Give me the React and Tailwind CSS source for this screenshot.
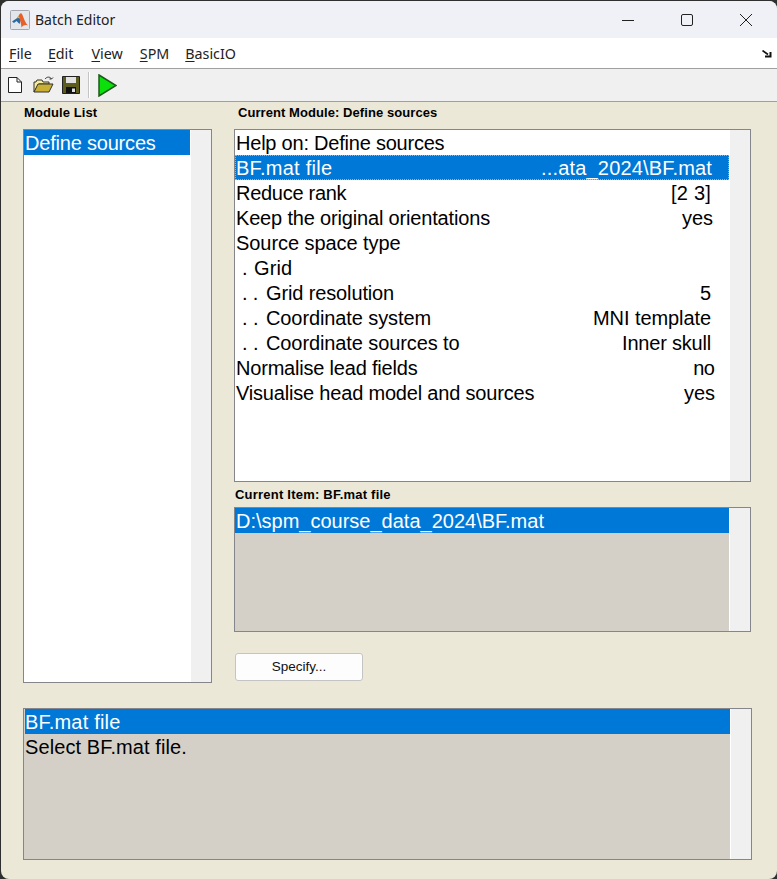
import React from "react";

const rows = [
  { label: "Reduce rank", track: "tracking-[-0.28px]", value: "[2 3]", valueTrack: "tracking-[0.2px]", pr: "pr-[18px]" },
  { label: "Keep the original orientations", track: "tracking-[-0.17px]", value: "yes", pr: "pr-[16px]" },
  { label: "Source space type", track: "tracking-[-0.06px]", value: "" },
  { dots: ".", label: "Grid", track: "tracking-[0.1px]", value: "" },
  { dots: ". .", label: "Grid resolution", track: "tracking-[-0.13px]", value: "5", pr: "pr-[18px]" },
  { dots: ". .", label: "Coordinate system", track: "tracking-[-0.1px]", value: "MNI template", valueTrack: "tracking-[-0.08px]", pr: "pr-[18px]" },
  { dots: ". .", label: "Coordinate sources to", track: "tracking-[-0.1px]", value: "Inner skull", valueTrack: "tracking-[-0.2px]", pr: "pr-[18px]" },
  { label: "Normalise lead fields", track: "tracking-[-0.2px]", value: "no", valueTrack: "tracking-[-0.8px]", pr: "pr-[15px]" },
  { label: "Visualise head model and sources", track: "tracking-[-0.19px]", value: "yes", pr: "pr-[14px]" },
];

const MatlabLogo = () => (
  <svg width="20" height="20" viewBox="0 0 20 20">
    <rect x="0.5" y="0.5" width="19" height="19" rx="1" fill="#e3e6ea" stroke="#a4a8ae" />
    <path d="M2 11.5 L6.5 8.5 L8.5 6 L11 9.5 L9.5 14 L6.5 11 L4 13 Z" fill="#2a6aa6" />
    <path d="M8.5 6 C10 2.5 11.5 2.5 12.5 5 C14 9 15.5 13.5 18 15.5 C15.5 14.5 13.5 15 11.5 17.5 C11 13 10 9 8.5 6 Z" fill="#e6602a" />
    <path d="M6.5 8.5 L8.5 6 L10 8.5 L8 8 Z" fill="#f2b233" />
  </svg>
);

const Pane = ({ className, bg, children }) => (
  <div className={`flex border border-[#84868c] ${className}`}>
    <div className={`flex-1 min-w-0 overflow-hidden ${bg}`}>{children}</div>
    <div className="w-[21px] shrink-0 bg-[#f0f0f0] border-l border-white" />
  </div>
);

const Menu = ({ first, rest, className }) => (
  <span className={className}>
    <span className="underline underline-offset-2">{first}</span>
    {rest}
  </span>
);

const App = () => {
  return (
    <div className="w-[777px] h-[879px] bg-[#2f2f2f] overflow-hidden font-['Liberation_Sans',sans-serif] text-black">
      <div className="w-[776px] h-[878px] ml-px mt-px rounded-t-lg rounded-b-lg overflow-hidden flex flex-col bg-[#ebe8d8]">
        {/* Title bar */}
        <div className="h-[37px] shrink-0 bg-[#f0f1f6] flex items-center pl-[9px]">
          <MatlabLogo />
          <span className="ml-[5px] text-[14px] font-['Noto_Sans',sans-serif] text-[#222]">Batch Editor</span>
          <div className="ml-auto flex items-center text-[#222]">
            <svg width="14" height="14" viewBox="0 0 14 14" className="mr-[45px]"><path d="M1 7.5H13" stroke="#222" strokeWidth="1" /></svg>
            <svg width="14" height="14" viewBox="0 0 14 14" className="mr-[45px]"><rect x="1.5" y="1.5" width="11" height="11" rx="1.5" fill="none" stroke="#222" /></svg>
            <svg width="14" height="14" viewBox="0 0 14 14" className="mr-[24px]"><path d="M1 1L13 13M13 1L1 13" stroke="#222" /></svg>
          </div>
        </div>

        {/* Menu bar */}
        <div className="h-[31px] shrink-0 bg-white border-b border-[#a0a0a0] flex items-center pt-px pl-[8px] pr-[5px] gap-[16px] text-[14.3px] font-['Noto_Sans',sans-serif] text-[#222]">
          <Menu first="F" rest="ile" />
          <Menu first="E" rest="dit" />
          <Menu first="V" rest="iew" className="ml-[2px]" />
          <Menu first="S" rest="PM" className="ml-px" />
          <Menu first="B" rest="asicIO" />
          <svg width="10" height="8" viewBox="0 0 10 8" className="ml-auto">
            <path d="M0.5 0.5L6 4.5" stroke="#111" strokeWidth="1.6" fill="none" />
            <path d="M3 7.5H9.5V2L7.5 2V5.5H3Z" fill="#111" />
          </svg>
        </div>

        {/* Toolbar */}
        <div className="h-[33px] shrink-0 bg-[#f0f0f0] border-b border-[#a0a0a0] flex items-center pl-[6px]">
          <svg width="16" height="18" viewBox="0 0 16 18"><path d="M1.5 1.5H10L14.5 6V16.5H1.5Z" fill="#fff" stroke="#222" /><path d="M10 1.5V6H14.5" fill="none" stroke="#222" /></svg>
          <svg width="21" height="18" viewBox="0 0 21 18" className="ml-[10px]">
            <path d="M1 16V6H3L4 4H9L10 6H16V8H6L1 16Z" fill="#f6eca0" stroke="#333" />
            <path d="M1 16L5 8H20L16 16Z" fill="#c9b032" stroke="#333" />
            <path d="M12 3C14 0.5 17 0.5 18.5 3M18.5 3L20 1.5M18.5 3L16.5 3" fill="none" stroke="#333" />
          </svg>
          <svg width="18" height="18" viewBox="0 0 18 18" className="ml-[8px]">
            <path d="M0.5 0.5H17.5V17.5H0.5Z" fill="#5c5c1e" stroke="#222" />
            <rect x="4" y="1" width="10" height="6" fill="#e2e2e2" />
            <rect x="4" y="11" width="10" height="6" fill="#111" />
            <rect x="10" y="12.5" width="3" height="3.5" fill="#ddd" />
          </svg>
          <div className="ml-[8px] h-[26px] w-[2px] bg-[#c4c4c4] border-r border-white" />
          <svg width="19" height="23" viewBox="0 0 19 23" className="ml-[8px]">
            <path d="M1 1L18 11.5L1 22Z" fill="#0be00b" stroke="#1a5a1a" strokeWidth="1.5" />
          </svg>
        </div>

        {/* Body */}
        <div className="flex-1 flex flex-col pl-[22px]">
          <div className="flex">
            <div className="w-[189px] shrink-0">
              <div className="h-[27px] pl-px pt-[3px] text-[13px] leading-[16px] font-bold tracking-[0.08px]">Module List</div>
              <Pane className="h-[554px]" bg="bg-white">
                <div className="h-[25px] bg-[#0078d7] text-white text-[20px] leading-[27px] pl-px tracking-[-0.2px] whitespace-nowrap">Define sources</div>
              </Pane>
            </div>

            <div className="w-[517px] ml-[22px] shrink-0">
              <div className="h-[27px] pl-[4px] pt-[3px] text-[13px] leading-[16px] font-bold tracking-[0.07px]">Current Module: Define sources</div>
              <Pane className="h-[353px]" bg="bg-white">
                <div className="text-[20px] leading-[27px] whitespace-nowrap">
                  <div className="h-[25px] pl-px tracking-[-0.22px]">Help on: Define sources</div>
                  <div className="h-[25px] pr-[16px] flex justify-between bg-[#0078d7] text-white border border-dotted border-[#e8a060] leading-[25px]">
                    <span className="tracking-[0.27px]">BF.mat file</span>
                    <span className="tracking-[0.17px]">...ata_2024\BF.mat</span>
                  </div>
                  {rows.map((row) => (
                    <div key={row.label} className={`h-[25px] pl-px flex justify-between ${row.pr || ""}`}>
                      <span className={`flex ${row.track}`}>
                        {row.dots && (
                          <span className={row.dots === "." ? "w-[18px] pl-[6px]" : "w-[30px] pl-[6px]"}>{row.dots}</span>
                        )}
                        {row.label}
                      </span>
                      <span className={row.valueTrack || ""}>{row.value}</span>
                    </div>
                  ))}
                </div>
              </Pane>
              <div className="h-[25px] pl-px pt-[5px] text-[13px] leading-[16px] font-bold tracking-[0.22px]">Current Item: BF.mat file</div>
              <Pane className="h-[125px]" bg="bg-[#d4d0c8]">
                <div className="h-[25px] bg-[#0078d7] text-white text-[20px] leading-[27px] pl-px whitespace-nowrap">D:\spm_course_data_2024\BF.mat</div>
              </Pane>
              <button className="block mt-[21px] ml-px w-[128px] h-[28px] rounded-[3px] bg-[#fdfdfd] border border-[#c4c4c4] text-[13.5px] text-[#111]">Specify...</button>
            </div>
          </div>

          <Pane className="w-[729px] h-[152px] mt-[25px]" bg="bg-[#d4d0c8]">
            <div className="text-[20px] leading-[27px] pl-px whitespace-nowrap">
              <div className="h-[25px] bg-[#0078d7] text-white tracking-[0.2px]">BF.mat file</div>
              <div className="h-[25px] tracking-[0.1px]">Select BF.mat file.</div>
            </div>
          </Pane>
        </div>
      </div>
    </div>
  );
};

export default App;
